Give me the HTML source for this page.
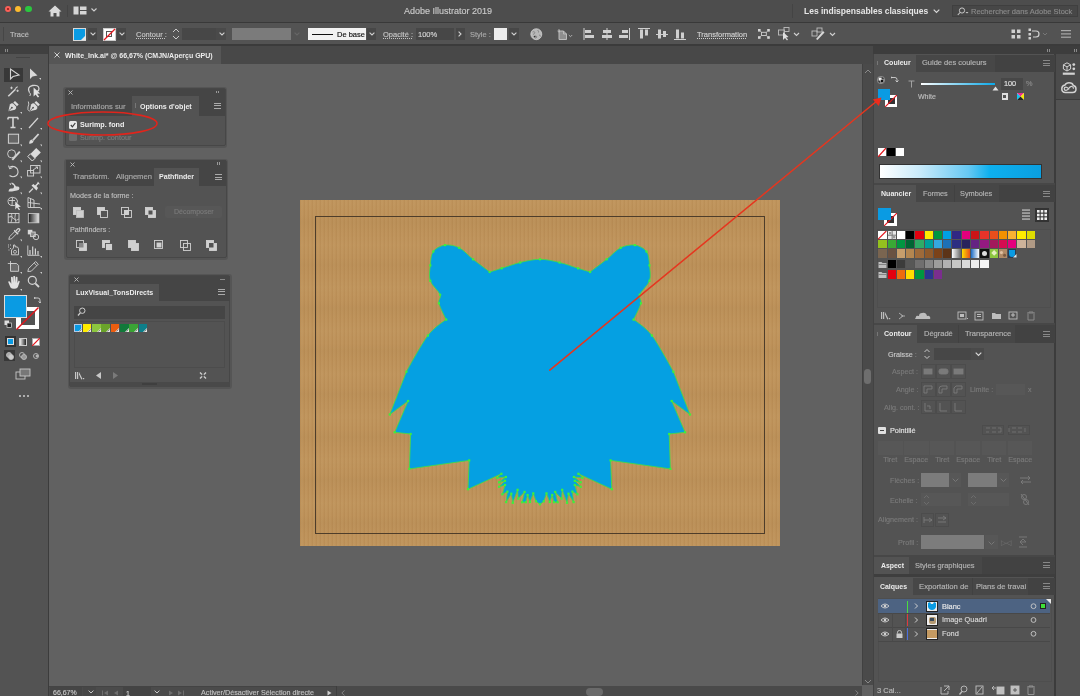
<!DOCTYPE html>
<html><head><meta charset="utf-8">
<style>
*{margin:0;padding:0;box-sizing:border-box}
html,body{width:1080px;height:696px;overflow:hidden;background:#616161;font-family:"Liberation Sans",sans-serif;color:#ddd}
.a{position:absolute}
.t{position:absolute;white-space:nowrap;font-size:7.5px;line-height:10px;-webkit-text-stroke:0.15px currentColor;will-change:transform}
.t[style*="font-weight:700"]{-webkit-text-stroke:0}
</style></head><body>
<!-- ===== TITLE BAR ===== -->
<div class="a" style="left:0;top:0;width:1080px;height:22px;background:#4d4d4d"></div>
<div class="a" style="left:0;top:22px;width:1080px;height:1px;background:#393939"></div>
<div class="a" style="left:4.5px;top:5.7px;width:6.6px;height:6.6px;border-radius:50%;background:#fc5f57"></div>
<div class="a" style="left:6.8px;top:8px;width:2px;height:2px;border-radius:50%;background:#8a1a14"></div>
<div class="a" style="left:14.8px;top:5.7px;width:6.6px;height:6.6px;border-radius:50%;background:#fdbb2e"></div>
<div class="a" style="left:25.4px;top:5.7px;width:6.6px;height:6.6px;border-radius:50%;background:#2ac73f"></div>
<svg class="a" style="left:48px;top:5px" width="14" height="12" viewBox="0 0 14 12"><path d="M7 0.5 L13.5 6.5 L11.5 6.5 L11.5 11.5 L8.5 11.5 L8.5 8 L5.5 8 L5.5 11.5 L2.5 11.5 L2.5 6.5 L0.5 6.5 Z" fill="#d9d9d9"/></svg>
<div class="a" style="left:67px;top:5px;width:1px;height:12px;background:#444"></div>
<svg class="a" style="left:73px;top:6px" width="14" height="9" viewBox="0 0 14 9"><rect x="0.5" y="0.5" width="5" height="8" fill="#d6d6d6"/><rect x="7" y="0.5" width="6.5" height="3.5" fill="#d6d6d6"/><rect x="7" y="5" width="6.5" height="3.5" fill="#d6d6d6"/></svg>
<svg class="a" style="left:91px;top:8px" width="6" height="4" viewBox="0 0 6 4"><path d="M0.5 0.5 L3 3 L5.5 0.5" stroke="#cfcfcf" stroke-width="1.1" fill="none"/></svg>
<div class="t" style="left:404px;top:6px;font-size:9px;line-height:11px;color:#c9c9c9">Adobe Illustrator 2019</div>
<div class="a" style="left:792px;top:4px;width:1px;height:14px;background:#444"></div>
<div class="t" style="left:803.5px;top:6px;font-size:8.5px;line-height:11px;font-weight:700;color:#e6e6e6">Les indispensables classiques</div>
<svg class="a" style="left:933px;top:9px" width="7" height="5" viewBox="0 0 7 5"><path d="M0.7 0.7 L3.5 3.5 L6.3 0.7" stroke="#d8d8d8" stroke-width="1.2" fill="none"/></svg>
<div class="a" style="left:952px;top:5px;width:126px;height:12px;background:#474747;border:1px solid #3f3f3f"></div>
<svg class="a" style="left:957px;top:7px" width="12" height="9" viewBox="0 0 12 9"><circle cx="5" cy="3.5" r="2.6" stroke="#c8c8c8" stroke-width="1" fill="none"/><path d="M3 5.5 L0.8 8" stroke="#c8c8c8" stroke-width="1.1"/><path d="M8.5 5 L10 6.5 L11.5 5 Z" fill="#c8c8c8"/></svg>
<div class="t" style="left:970.5px;top:6px;font-size:7.5px;line-height:11px;color:#8a8a8a">Rechercher dans Adobe Stock</div>

<!-- ===== CONTROL BAR ===== -->
<div class="a" style="left:0;top:23px;width:1080px;height:22px;background:#535353"></div>
<div class="a" style="left:0;top:44px;width:1080px;height:2px;background:#3b3b3b"></div>
<div class="a" style="left:3px;top:27px;width:1px;height:14px;background:#464646"></div>
<div class="t" style="left:10px;top:30px;font-size:7.5px;color:#bdbdbd">Tracé</div>
<!-- fill swatch -->
<div class="a" style="left:73px;top:27.5px;width:13px;height:13px;background:#0a9be3;border:1px solid #d8d8d8"></div>
<svg class="a" style="left:81px;top:35px" width="5" height="5" viewBox="0 0 5 5"><path d="M5 0 L5 5 L0 5 Z" fill="#e8e8e8"/></svg>
<div class="a" style="left:88px;top:28px;width:9px;height:12px;background:#474747"></div>
<svg class="a" style="left:90px;top:32px" width="6" height="4" viewBox="0 0 6 4"><path d="M0.6 0.6 L3 3 L5.4 0.6" stroke="#d0d0d0" stroke-width="1.1" fill="none"/></svg>
<!-- stroke swatch -->
<div class="a" style="left:102.5px;top:27.5px;width:13px;height:13px;background:#fff;border:1px solid #ccc"></div>
<div class="a" style="left:106px;top:31px;width:6px;height:6px;border:1px solid #555"></div>
<svg class="a" style="left:102.5px;top:27.5px" width="13" height="13" viewBox="0 0 13 13"><path d="M12 1 L1 12" stroke="#e8141c" stroke-width="1.3"/></svg>
<div class="a" style="left:117px;top:28px;width:9px;height:12px;background:#474747"></div>
<svg class="a" style="left:119px;top:32px" width="6" height="4" viewBox="0 0 6 4"><path d="M0.6 0.6 L3 3 L5.4 0.6" stroke="#d0d0d0" stroke-width="1.1" fill="none"/></svg>
<div class="t" style="left:136px;top:30px;font-size:7.5px;color:#c4c4c4;text-decoration:underline dotted;text-underline-offset:1px">Contour :</div>
<svg class="a" style="left:172px;top:28px" width="8" height="12" viewBox="0 0 8 12"><path d="M1 4 L4 1 L7 4 M1 8 L4 11 L7 8" stroke="#c9c9c9" stroke-width="1" fill="none"/></svg>
<div class="a" style="left:182px;top:28px;width:34px;height:12px;background:#474747"></div>
<div class="a" style="left:216px;top:28px;width:10px;height:12px;background:#4a4a4a"></div>
<svg class="a" style="left:219px;top:32px" width="6" height="4" viewBox="0 0 6 4"><path d="M0.6 0.6 L3 3 L5.4 0.6" stroke="#d0d0d0" stroke-width="1.1" fill="none"/></svg>
<div class="a" style="left:232px;top:28px;width:59px;height:12px;background:#7b7b7b"></div>
<svg class="a" style="left:294px;top:32px" width="6" height="4" viewBox="0 0 6 4"><path d="M0.6 0.6 L3 3 L5.4 0.6" stroke="#666" stroke-width="1.1" fill="none"/></svg>
<div class="a" style="left:308px;top:28px;width:57.5px;height:12px;background:#f2f2f2"></div>
<div class="a" style="left:312px;top:33.5px;width:21px;height:1.3px;background:#111"></div>
<div class="t" style="left:336.5px;top:30px;font-size:7.5px;color:#111">De base</div>
<div class="a" style="left:367px;top:28px;width:9px;height:12px;background:#474747"></div>
<svg class="a" style="left:369px;top:32px" width="6" height="4" viewBox="0 0 6 4"><path d="M0.6 0.6 L3 3 L5.4 0.6" stroke="#d0d0d0" stroke-width="1.1" fill="none"/></svg>
<div class="t" style="left:382.5px;top:30px;font-size:7.5px;color:#c4c4c4;text-decoration:underline dotted;text-underline-offset:1px">Opacité :</div>
<div class="a" style="left:416px;top:28px;width:38px;height:12px;background:#474747"></div>
<div class="t" style="left:418px;top:30px;font-size:7.5px;color:#d4d4d4">100%</div>
<div class="a" style="left:455.5px;top:28px;width:9.5px;height:12px;background:#474747"></div>
<svg class="a" style="left:458px;top:31px" width="4" height="6" viewBox="0 0 4 6"><path d="M0.6 0.6 L3 3 L0.6 5.4" stroke="#d0d0d0" stroke-width="1.1" fill="none"/></svg>
<div class="t" style="left:470px;top:30px;font-size:7.5px;color:#a8a8a8">Style :</div>
<div class="a" style="left:494px;top:28px;width:13px;height:12px;background:#ececec"></div>
<div class="a" style="left:509px;top:28px;width:10px;height:12px;background:#474747"></div>
<svg class="a" style="left:511px;top:32px" width="6" height="4" viewBox="0 0 6 4"><path d="M0.6 0.6 L3 3 L5.4 0.6" stroke="#d0d0d0" stroke-width="1.1" fill="none"/></svg>
<svg class="a" style="left:530px;top:28px" width="13" height="13" viewBox="0 0 13 13"><circle cx="6.3" cy="6.2" r="5.5" fill="#b8b8b8"/><circle cx="6.3" cy="6.2" r="5.5" fill="none" stroke="#d8d8d8" stroke-width="0.7"/><path d="M2.5 4 Q4 3 5 4.5 Q4.5 6 3 6.5 M7.5 2 Q9 3 8.5 4.5 M5 8 Q6.5 7.5 7 9 Q6 10.5 5 10 M9 7 Q10.5 7 10.5 8.5" stroke="#8a8a8a" stroke-width="1" fill="none"/><circle cx="4.6" cy="8.6" r="0.9" fill="#333"/></svg>
<svg class="a" style="left:557px;top:28px" width="18" height="13" viewBox="0 0 18 13"><path d="M2 3 L6.5 3 L9.5 6 L9.5 11.5 L2 11.5 Z" fill="#8e8e8e" stroke="#c4c4c4" stroke-width="0.9"/><path d="M6.5 3 L6.5 6 L9.5 6" stroke="#c4c4c4" stroke-width="0.8" fill="none"/><path d="M0.5 3 L3 3 M2 1 L2 4.5" stroke="#c4c4c4" stroke-width="0.8"/><path d="M11.8 7 L13.5 8.7 L15.2 7" stroke="#b8b8b8" stroke-width="0.9" fill="none"/></svg>
<!-- align icons -->
<svg class="a" style="left:583px;top:27px" width="104" height="14" viewBox="0 0 104 14" fill="#cfcfcf">
<rect x="0.5" y="1" width="1" height="12"/><rect x="2" y="3" width="6" height="3"/><rect x="2" y="8" width="9" height="3"/>
<rect x="23.5" y="1" width="1" height="12"/><rect x="20" y="3" width="8" height="3"/><rect x="19" y="8" width="10" height="3"/>
<rect x="46" y="1" width="1" height="12"/><rect x="39" y="3" width="6" height="3"/><rect x="36" y="8" width="9" height="3"/>
<rect x="55" y="1" width="12" height="1"/><rect x="57" y="2.5" width="3" height="9"/><rect x="62" y="2.5" width="3" height="6"/>
<rect x="73" y="7" width="12" height="1"/><rect x="75" y="2.5" width="3" height="9"/><rect x="80" y="4" width="3" height="6"/>
<rect x="91" y="12" width="12" height="1"/><rect x="93" y="2.5" width="3" height="9"/><rect x="98" y="5.5" width="3" height="6"/>
</svg>
<div class="t" style="left:697px;top:30px;font-size:7.5px;color:#d0d0d0;text-decoration:underline dotted;text-underline-offset:1px">Transformation</div>
<svg class="a" style="left:758px;top:29px" width="12" height="10" viewBox="0 0 12 10"><g fill="#d4d4d4"><rect x="0" y="0" width="2.6" height="2.6"/><rect x="9.2" y="0" width="2.6" height="2.6"/><rect x="0" y="7.2" width="2.6" height="2.6"/><rect x="9.2" y="7.2" width="2.6" height="2.6"/></g><path d="M2 2 L3.5 3.2 M9.8 2 L8.3 3.2 M2 7.8 L3.5 6.6 M9.8 7.8 L8.3 6.6" stroke="#bbb" stroke-width="0.8"/><rect x="3.5" y="3.3" width="4.8" height="3.2" fill="none" stroke="#cfcfcf" stroke-width="0.9"/></svg>
<svg class="a" style="left:778px;top:27px" width="24" height="14" viewBox="0 0 24 14"><rect x="0.5" y="3" width="6" height="5" stroke="#bdbdbd" stroke-width="0.9" fill="none"/><rect x="6" y="0.5" width="5" height="4" stroke="#bdbdbd" stroke-width="0.9" fill="none"/><path d="M5 5 L5 13 L7 11 L9 13.5 L10 12.5 L8 10.5 L10.5 10 Z" fill="#e0e0e0"/><path d="M16 6 L18.5 8.5 L21 6" stroke="#d0d0d0" stroke-width="1.1" fill="none"/></svg>
<svg class="a" style="left:811px;top:27px" width="26" height="14" viewBox="0 0 26 14"><rect x="1" y="4" width="5" height="5" stroke="#bdbdbd" stroke-width="0.9" fill="none"/><rect x="6" y="1" width="5" height="4" stroke="#bdbdbd" stroke-width="0.9" fill="none"/><path d="M5 12 L12 4 L13.5 5.5 L6.5 13 Z" fill="#d8d8d8"/><path d="M19 6 L21.5 8.5 L24 6" stroke="#d0d0d0" stroke-width="1.1" fill="none"/></svg>
<svg class="a" style="left:1011px;top:29px" width="10" height="10" viewBox="0 0 10 10" fill="#d0d0d0"><rect x="0.5" y="0.5" width="3.5" height="3.5"/><rect x="6" y="0.5" width="3.5" height="3.5"/><rect x="0.5" y="6" width="3.5" height="3.5"/><rect x="6" y="6" width="3.5" height="3.5"/></svg>
<svg class="a" style="left:1028px;top:28px" width="22" height="12" viewBox="0 0 22 12"><rect x="0.5" y="0.5" width="2.5" height="2.5" fill="#d0d0d0"/><rect x="0.5" y="5" width="2.5" height="2.5" fill="#d0d0d0"/><rect x="0.5" y="9" width="2.5" height="2.5" fill="#d0d0d0"/><path d="M4 3 L8 3 Q11 3 11 6 Q11 9 8 9 L5 9" stroke="#d0d0d0" stroke-width="1.2" fill="none"/><path d="M15 5 L17 7 L19 5" stroke="#777" stroke-width="1" fill="none"/></svg>
<svg class="a" style="left:1061px;top:30px" width="10" height="8" viewBox="0 0 10 8" fill="#aaa"><rect x="0" y="0" width="10" height="1.2"/><rect x="0" y="3.3" width="10" height="1.2"/><rect x="0" y="6.6" width="10" height="1.2"/></svg>
<!-- ===== TOOLS PANEL ===== -->
<div class="a" style="left:0;top:46px;width:48px;height:650px;background:#535353"></div>
<div class="a" style="left:0;top:46px;width:48px;height:8px;background:#404040"></div>
<div class="a" style="left:5px;top:48.5px;width:0.8px;height:3px;background:#8a8a8a"></div>
<div class="a" style="left:7px;top:48.5px;width:0.8px;height:3px;background:#8a8a8a"></div>
<div class="a" style="left:16px;top:56.5px;width:14px;height:1.5px;background:#444"></div>
<div class="a" style="left:48px;top:46px;width:1px;height:650px;background:#3c3c3c"></div>
<div class="a" style="left:4px;top:67.5px;width:18.5px;height:14px;background:#383838"></div>
<svg class="a" style="left:0;top:64px" width="48" height="340" viewBox="0 0 48 340" fill="none" stroke="#d4d4d4" stroke-width="1">
<!-- row1 select -->
<path d="M10.5 5 L10.5 15 L13 12.5 L19 11 Z" stroke-width="1.1"/>
<path d="M30 4.5 L30 15 L32.5 12.5 L37.5 11.5 Z" fill="#d8d8d8" stroke="none"/>
<path d="M39 14 L41 14 L41 16 Z" fill="#ccc" stroke="none"/>
<!-- row2 magic wand / lasso -->
<path d="M8.3 32.3 L15.5 25.2" stroke-width="1.6"/><path d="M15.2 24.6 L17.6 22.6" stroke-width="1.2"/>
<path d="M11.5 22.6 L11.5 25.2 M10.2 23.9 L12.8 23.9 M17.6 25.6 L17.6 28 M16.4 26.8 L18.8 26.8" stroke-width="0.9"/>
<path d="M29.5 28.5 Q26.5 23 32.5 21.5 Q38.5 20.5 39 24.5 Q39.2 26.5 37 27.5" stroke-width="1.3"/><path d="M29.5 28.5 Q31.5 30 29.8 32" stroke-width="1"/>
<path d="M33.6 23.5 L33.6 32.5 L35.6 30.4 L37.8 33.6 L39.2 32.8 L37.1 29.7 L40.2 29.5 Z" fill="#e2e2e2" stroke="none"/>
<!-- row3 pen -->
<g transform="translate(13.3 42.3) rotate(45)"><path d="M0 7 L-3.6 1.2 Q-3.8 -1.2 -2 -1.8 L2 -1.8 Q3.8 -1.2 3.6 1.2 Z" fill="#dcdcdc" stroke="none"/><path d="M0 7 L0 2.2" stroke="#535353" stroke-width="0.8"/><circle cx="0" cy="2" r="0.9" fill="#535353" stroke="none"/><rect x="-2.6" y="-5" width="5.2" height="2.4" fill="#dcdcdc" stroke="none"/></g>
<g transform="translate(34.5 42.3) rotate(45)"><path d="M0 7 L-3.6 1.2 Q-3.8 -1.2 -2 -1.8 L2 -1.8 Q3.8 -1.2 3.6 1.2 Z" fill="#dcdcdc" stroke="none"/><path d="M0 7 L0 2.2" stroke="#535353" stroke-width="0.8"/><circle cx="0" cy="2" r="0.9" fill="#535353" stroke="none"/><rect x="-2.6" y="-5" width="5.2" height="2.4" fill="#dcdcdc" stroke="none"/></g>
<path d="M28.3 37.5 Q29.5 40 28 43 Q27 46 29.8 47.5" stroke-width="0.9"/>
<path d="M20 48 L22 48 L22 50 Z" fill="#ccc" stroke="none"/>
<!-- row4 T / line -->
<path d="M8 53.5 L18 53.5 M13 53.5 L13 63.5 M10.5 63.5 L15.5 63.5 M8 53.5 L8 55.5 M18 53.5 L18 55.5" stroke-width="1.6"/>
<path d="M29 64 L38 54" stroke-width="1.2"/>
<path d="M20 64 L22 64 L22 66 Z" fill="#ccc" stroke="none"/><path d="M40 64 L42 64 L42 66 Z" fill="#ccc" stroke="none"/>
<!-- row5 rect / brush -->
<rect x="8.4" y="70.2" width="10.2" height="9" stroke-width="1" fill="#666"/>
<path d="M29 79.6 Q29.3 76.3 31.5 75.6 L33.6 77.6 Q33 80 29 79.6 Z" fill="#dadada" stroke="none"/><path d="M32.8 76.4 L38.6 70" stroke-width="1.8"/>
<path d="M20 80.5 L22 80.5 L22 82.5 Z" fill="#ccc" stroke="none"/><path d="M40 80.5 L42 80.5 L42 82.5 Z" fill="#ccc" stroke="none"/>
<!-- row6 shaper / eraser -->
<circle cx="11.6" cy="89.8" r="4" stroke-width="0.9"/><path d="M12.3 95.8 L19.8 87.6" stroke-width="1.9"/>
<g transform="translate(34.3 90.5) rotate(-45)"><rect x="-6" y="-3.2" width="12" height="6.4" fill="#dcdcdc" stroke="none"/><rect x="-6" y="-3.2" width="3.8" height="6.4" fill="#535353" stroke="#dcdcdc" stroke-width="0.9"/></g>
<path d="M20 96.5 L22 96.5 L22 98.5 Z" fill="#ccc" stroke="none"/><path d="M40 96.5 L42 96.5 L42 98.5 Z" fill="#ccc" stroke="none"/>
<!-- row7 rotate / scale -->
<path d="M9.8 103.2 Q13.5 101 17 104.5 Q19.3 108.5 16.5 111.5 Q13 114 9.5 111.5" stroke-width="1.1"/><path d="M8.6 101.6 L9.6 104.8 L12.6 103.6" stroke-width="1"/>
<rect x="27.6" y="106.5" width="6" height="5.5" stroke-width="0.9"/><rect x="30.6" y="101.5" width="9.4" height="7.5" stroke-width="0.9"/><path d="M33 106 L37.5 103 M35.5 103 L37.5 103 L37.5 105" stroke-width="0.9"/>
<path d="M20 112.5 L22 112.5 L22 114.5 Z" fill="#ccc" stroke="none"/><path d="M40 112.5 L42 112.5 L42 114.5 Z" fill="#ccc" stroke="none"/>
<!-- row8 warp / pin -->
<path d="M8.5 127.5 Q9 124 11.5 124.5 Q13.5 125 14 123 Q14.5 121 12.5 120.5 Q11 120 11.5 118.5 L13 119 Q14 119.5 15 121 Q16 123 17.5 122.5 Q19 122 19.5 124 Q19.5 126 17 126.5 Q14 127 12 127.5 Z" fill="#d8d8d8" stroke="none"/>
<path d="M10 119 L10.5 121" stroke-width="0.9"/>
<path d="M29 128.5 L33 124.5" stroke-width="1.2"/><path d="M31.5 121.5 L36.5 126.5 L38 124 L36.5 122 L38.5 120 L40 120.5 L38 117.5 L37 119.5 L35 121.5 L33.5 120 Z" fill="#dcdcdc" stroke="none"/>
<path d="M20 128.5 L22 128.5 L22 130.5 Z" fill="#ccc" stroke="none"/><path d="M40 128.5 L42 128.5 L42 130.5 Z" fill="#ccc" stroke="none"/>
<!-- row9 shape builder / perspective -->
<path d="M8 137.5 Q8 133.5 12.5 133.3 Q17 133.5 17.5 137 Q17.5 140 14.5 141.5 L11 141.5 Q8 140.5 8 137.5 Z M9 136.5 L15 136.5 M12.5 133.5 L12 141.5" stroke-width="0.9"/>
<path d="M15.3 137.5 L15.3 145.5 L17 143.6 L19 146.3 L20 145.6 L18.3 143 L20.8 142.8 Z" fill="#e0e0e0" stroke="none"/>
<path d="M28 133.5 L28 143.5 L40.5 143.5 M28 133.5 L34 136 L34 143.5 M28 138.5 L40 140 M30.5 134.5 L30.5 143.5" stroke-width="0.9"/>
<path d="M40 144 L42 144 L42 146 Z" fill="#ccc" stroke="none"/>
<!-- row10 mesh / gradient -->
<rect x="8.2" y="149.5" width="10.8" height="9.2" stroke-width="0.9"/><path d="M8.2 153 Q12 151.5 14 155 Q16 157.5 19 155 M11.5 149.5 Q13 153 11 158.7 M15.5 149.5 Q14 153 16 158.7 M10 152 L12 153" stroke-width="0.8"/>
<defs><linearGradient id="tg" x1="0" x2="1"><stop offset="0" stop-color="#1a1a1a"/><stop offset="1" stop-color="#e8e8e8"/></linearGradient></defs>
<rect x="28.3" y="149.6" width="10.6" height="9.2" fill="url(#tg)" stroke="#cfcfcf" stroke-width="0.8"/>
<!-- row11 eyedropper / blend -->
<path d="M8.8 175.4 L9.5 172.8 L15 167.3 L17 169.3 L11.5 174.8 Z" stroke-width="0.9"/>
<path d="M14.2 166.2 L18.2 170.2 M16 166.7 L17.8 164.9 Q18.8 164.2 19.5 165 Q20.2 165.8 19.5 166.6 L17.7 168.4" stroke-width="1.3"/>
<rect x="27.8" y="165.8" width="4.6" height="4.6" fill="#d8d8d8" stroke="none"/><rect x="30.6" y="168" width="4.6" height="4.6" stroke-width="0.9" fill="#888"/><circle cx="36" cy="173" r="2.7" stroke-width="0.9"/>
<path d="M20 175.5 L22 175.5 L22 177.5 Z" fill="#ccc" stroke="none"/>
<!-- row12 symbol sprayer / graph -->
<path d="M11.5 186 L11.5 190.8 L18.5 190.8 L18.5 184.8 Q18.5 182.8 16 182.8 L15 182.8 L15 181 L13.5 181 L13.5 184 L11.5 186 Z" stroke-width="0.9"/><circle cx="15" cy="187.8" r="1.5" stroke-width="0.8"/>
<path d="M8 181 L9 181 M10 181 L11 181 M8 183 L9 183 M10 184.5 L11 184.5 M8.5 186 L9.5 186" stroke-width="0.9"/>
<path d="M27.8 181.5 L27.8 191.3 L39.5 191.3" stroke-width="0.9"/><path d="M30 190.8 L30 186 M32.7 190.8 L32.7 182.5 M35.4 190.8 L35.4 184.5 M38 190.8 L38 187" stroke-width="1.2"/>
<path d="M20 192 L22 192 L22 194 Z" fill="#ccc" stroke="none"/><path d="M40 192 L42 192 L42 194 Z" fill="#ccc" stroke="none"/>
<!-- row13 artboard / slice -->
<path d="M10.5 199.5 L10.5 207.3 L18.6 207.3 L18.6 201.5 L16.6 199.5 Z" stroke-width="0.9" fill="#6a6a6a"/><path d="M7.8 199.5 L12.5 199.5 M10.5 197 L10.5 201.5" stroke-width="0.8"/>
<path d="M27.8 207.5 L28.6 204.5 L35.6 197.5 L38.3 200.2 L31.3 207.2 Z M34.2 199 L36.8 201.6" stroke-width="0.9"/>
<path d="M20 208 L22 208 L22 210 Z" fill="#ccc" stroke="none"/><path d="M40 208 L42 208 L42 210 Z" fill="#ccc" stroke="none"/>
<!-- row14 hand / zoom -->
<path d="M10.5 223.5 L8.2 218 Q8.3 216.8 9.8 217.4 L11.3 219.8 L11 213.3 Q11.8 212.3 12.8 213.2 L13.2 218.8 L13.3 212.3 Q14.2 211.5 15.1 212.3 L15.2 218.8 L15.8 213 Q16.7 212.3 17.5 213.2 L17.5 219.3 L18.5 216.7 Q19.8 216.5 19.7 217.8 L17.8 223.3 Q16.5 224.8 14 224.8 Q11.5 224.8 10.5 223.5 Z" fill="#e2e2e2" stroke="none"/>
<circle cx="32.3" cy="216.3" r="4" stroke-width="1.2"/><path d="M35.3 219.3 L39 223" stroke-width="1.8"/>
<path d="M20 225 L22 225 L22 227 Z" fill="#ccc" stroke="none"/>
</svg>
<!-- fill/stroke big -->
<div class="a" style="left:16px;top:306.5px;width:23px;height:22.5px;background:#fff"></div>
<div class="a" style="left:20.5px;top:311px;width:14px;height:13.5px;background:#535353"></div>
<svg class="a" style="left:16px;top:306.5px" width="23" height="23" viewBox="0 0 23 23"><path d="M22.5 0.5 L0.5 22.5" stroke="#e3141b" stroke-width="1.4"/></svg>
<div class="a" style="left:4px;top:295px;width:23px;height:22.5px;background:#0a9be3;border:1px solid #ddd"></div>
<svg class="a" style="left:33px;top:296px" width="8" height="8" viewBox="0 0 8 8"><path d="M1 2 L5 2 Q7 2 7 4 L7 7 M5.5 5.5 L7 7 L8 5.5" stroke="#cfcfcf" stroke-width="0.9" fill="none"/><path d="M1 1 L1 3 L3 2 Z" fill="#cfcfcf"/></svg>
<svg class="a" style="left:4px;top:320px" width="8" height="8" viewBox="0 0 8 8"><rect x="0.5" y="0.5" width="4.5" height="4.5" fill="#ddd"/><rect x="3" y="3" width="4.5" height="4.5" fill="#222" stroke="#ddd" stroke-width="0.7"/></svg>
<!-- mode buttons -->
<div class="a" style="left:5px;top:336px;width:11px;height:11px;background:#333"></div>
<div class="a" style="left:7px;top:338px;width:7px;height:7px;background:#0a9be3;border:0.6px solid #ddd"></div>
<div class="a" style="left:19px;top:338px;width:8px;height:8px;background:linear-gradient(90deg,#eee,#222);border:0.6px solid #ccc"></div>
<div class="a" style="left:32px;top:338px;width:8px;height:8px;background:#fff;border:0.6px solid #aaa"></div>
<svg class="a" style="left:32px;top:338px" width="8" height="8" viewBox="0 0 8 8"><path d="M8 0 L0 8" stroke="#e3141b" stroke-width="1.2"/></svg>
<div class="a" style="left:4px;top:350px;width:11px;height:11px;background:#383838"></div>
<svg class="a" style="left:5px;top:351px" width="40" height="10" viewBox="0 0 40 10" fill="none" stroke="#bdbdbd" stroke-width="0.9"><circle cx="4" cy="4" r="2.5" fill="#aaa"/><circle cx="6" cy="6" r="2.5" fill="#ccc"/><circle cx="17" cy="4" r="2.5"/><circle cx="19" cy="6" r="2.5" fill="#999"/><circle cx="31" cy="5" r="2.5"/><circle cx="32" cy="5" r="1" fill="#aaa"/></svg>
<svg class="a" style="left:15px;top:368px" width="16" height="12" viewBox="0 0 16 12" fill="none" stroke="#c8c8c8" stroke-width="0.9"><rect x="1" y="4" width="9" height="7"/><rect x="5" y="1" width="10" height="7" fill="#777"/></svg>
<div class="a" style="left:18.5px;top:395px;width:2px;height:2px;border-radius:50%;background:#ccc"></div>
<div class="a" style="left:22.5px;top:395px;width:2px;height:2px;border-radius:50%;background:#ccc"></div>
<div class="a" style="left:26.5px;top:395px;width:2px;height:2px;border-radius:50%;background:#ccc"></div>

<!-- ===== DOC TAB BAR ===== -->
<div class="a" style="left:49px;top:46px;width:824px;height:18px;background:#484848"></div>
<div class="a" style="left:49px;top:46px;width:172px;height:18px;background:#565656"></div>
<svg class="a" style="left:54px;top:52px" width="6" height="6" viewBox="0 0 6 6"><path d="M0.5 0.5 L5.5 5.5 M5.5 0.5 L0.5 5.5" stroke="#cfcfcf" stroke-width="1"/></svg>
<div class="t" style="left:64.5px;top:51px;font-size:7px;line-height:10px;font-weight:700;color:#ececec">White_Ink.ai* @ 66,67% (CMJN/Aperçu GPU)</div>
<!-- ===== CANVAS ===== -->
<div class="a" style="left:49px;top:64px;width:813px;height:622px;background:#616161"></div>
<!-- artboard -->

<div class="a" style="left:300px;top:200px;width:480px;height:346px;background:#bd9159;background-image:repeating-linear-gradient(90deg,rgba(110,70,20,0.05) 0px,rgba(110,70,20,0.05) 1px,rgba(255,235,190,0.035) 1px,rgba(255,235,190,0.035) 3px,rgba(110,70,20,0) 3px,rgba(110,70,20,0) 4px),repeating-linear-gradient(0deg,rgba(255,230,180,0.03) 0px,rgba(0,0,0,0) 11px,rgba(90,60,20,0.03) 23px,rgba(0,0,0,0) 31px,rgba(255,230,180,0.03) 43px)"></div>
<div class="a" style="left:315px;top:215.5px;width:450px;height:318px;border:1px solid #4e3d2a"></div>
<svg class="a" style="left:0;top:0" width="1080" height="696" viewBox="0 0 1080 696">
<path d="M540.0 259.3 C546.6 259.3 553.2 261.0 559.6 262.5 C566.0 264.0 573.0 266.7 578.1 268.3 C583.2 269.9 590.1 272.0 590.1 272.0 C590.1 272.0 601.6 263.3 606.7 259.3 C611.8 255.3 615.9 250.2 620.6 247.8 C625.3 245.4 630.5 244.5 634.8 245.1 C639.1 245.7 644.0 248.1 646.5 251.5 C649.0 254.9 649.0 260.5 649.5 265.4 C650.0 270.3 651.1 275.9 649.5 280.8 C647.9 285.7 641.1 290.9 639.7 294.7 C638.3 298.4 641.9 299.1 640.9 303.3 C639.9 307.5 633.6 319.6 633.6 319.6 C633.6 319.6 645.3 326.8 651.9 335.5 C658.5 344.2 673.4 371.7 673.4 371.7 L690.0 414.5 L671.7 401.0 L685.1 432.3 L669.2 434.0 L670.4 468.9 L610.6 460.4 L611.8 489.2 L578.4 473.8 L582.5 477.8 L573.9 477.0 L580.7 482.3 L574.8 480.8 L580.7 486.8 L574.8 485.0 L577.4 494.3 L572.4 491.6 L573.6 502.1 L568.5 493.7 L567.0 502.8 L562.2 489.8 L561.6 498.6 L555.2 491.9 L557.6 502.2 L554.0 502.2 L552.2 495.0 L549.8 502.0 L546.5 493.4 L543.8 501.3 L540.0 504.3 L536.0 501.3 L533.3 493.4 L530.0 502.0 L527.6 495.0 L525.8 502.2 L522.2 502.2 L524.6 491.9 L518.2 498.6 L517.6 489.8 L512.8 502.8 L511.3 493.7 L506.2 502.1 L507.4 491.6 L502.4 494.3 L505.0 485.0 L499.1 486.8 L505.0 480.8 L499.1 482.3 L505.9 477.0 L497.3 477.8 L501.4 473.8 L468.0 489.2 L469.2 460.4 L409.4 468.9 L410.6 434.0 L394.7 432.3 L408.1 401.0 L389.8 414.5 L406.4 371.7 C406.4 371.7 421.3 344.2 427.9 335.5 C434.5 326.8 446.2 319.6 446.2 319.6 C446.2 319.6 439.9 307.5 438.9 303.3 C437.9 299.1 441.5 298.4 440.1 294.7 C438.7 290.9 431.9 285.7 430.3 280.8 C428.7 275.9 429.8 270.3 430.3 265.4 C430.8 260.5 430.8 254.9 433.3 251.5 C435.7 248.1 440.7 245.7 445.0 245.1 C449.3 244.5 454.5 245.4 459.2 247.8 C463.9 250.2 468.0 255.3 473.1 259.3 C478.2 263.3 489.7 272.0 489.7 272.0 C489.7 272.0 496.6 269.9 501.7 268.3 C506.8 266.7 513.8 264.0 520.2 262.5 C526.6 261.0 533.4 259.3 540.0 259.3 Z" fill="#05a0e2" stroke="#45e03c" stroke-width="0.8" stroke-linejoin="miter"/>
<g fill="#3ef03a"><rect x="538.9" y="258.2" width="2.2" height="2.2"/><rect x="558.5" y="261.4" width="2.2" height="2.2"/><rect x="577.0" y="267.2" width="2.2" height="2.2"/><rect x="589.0" y="270.9" width="2.2" height="2.2"/><rect x="605.6" y="258.2" width="2.2" height="2.2"/><rect x="619.5" y="246.7" width="2.2" height="2.2"/><rect x="633.7" y="244.0" width="2.2" height="2.2"/><rect x="645.4" y="250.4" width="2.2" height="2.2"/><rect x="648.4" y="264.3" width="2.2" height="2.2"/><rect x="648.4" y="279.7" width="2.2" height="2.2"/><rect x="638.6" y="293.6" width="2.2" height="2.2"/><rect x="639.8" y="302.2" width="2.2" height="2.2"/><rect x="632.5" y="318.5" width="2.2" height="2.2"/><rect x="650.8" y="334.4" width="2.2" height="2.2"/><rect x="672.3" y="370.6" width="2.2" height="2.2"/><rect x="688.9" y="413.4" width="2.2" height="2.2"/><rect x="670.6" y="399.9" width="2.2" height="2.2"/><rect x="684.0" y="431.2" width="2.2" height="2.2"/><rect x="668.1" y="432.9" width="2.2" height="2.2"/><rect x="669.3" y="467.8" width="2.2" height="2.2"/><rect x="609.5" y="459.3" width="2.2" height="2.2"/><rect x="610.7" y="488.1" width="2.2" height="2.2"/><rect x="577.3" y="472.7" width="2.2" height="2.2"/><rect x="581.4" y="476.7" width="2.2" height="2.2"/><rect x="572.8" y="475.9" width="2.2" height="2.2"/><rect x="579.6" y="481.2" width="2.2" height="2.2"/><rect x="573.7" y="479.7" width="2.2" height="2.2"/><rect x="579.6" y="485.7" width="2.2" height="2.2"/><rect x="573.7" y="483.9" width="2.2" height="2.2"/><rect x="576.3" y="493.2" width="2.2" height="2.2"/><rect x="571.3" y="490.5" width="2.2" height="2.2"/><rect x="572.5" y="501.0" width="2.2" height="2.2"/><rect x="567.4" y="492.6" width="2.2" height="2.2"/><rect x="565.9" y="501.7" width="2.2" height="2.2"/><rect x="561.1" y="488.7" width="2.2" height="2.2"/><rect x="560.5" y="497.5" width="2.2" height="2.2"/><rect x="554.1" y="490.8" width="2.2" height="2.2"/><rect x="556.5" y="501.1" width="2.2" height="2.2"/><rect x="552.9" y="501.1" width="2.2" height="2.2"/><rect x="551.1" y="493.9" width="2.2" height="2.2"/><rect x="548.7" y="500.9" width="2.2" height="2.2"/><rect x="545.4" y="492.3" width="2.2" height="2.2"/><rect x="542.7" y="500.2" width="2.2" height="2.2"/><rect x="538.9" y="503.2" width="2.2" height="2.2"/><rect x="534.9" y="500.2" width="2.2" height="2.2"/><rect x="532.2" y="492.3" width="2.2" height="2.2"/><rect x="528.9" y="500.9" width="2.2" height="2.2"/><rect x="526.5" y="493.9" width="2.2" height="2.2"/><rect x="524.7" y="501.1" width="2.2" height="2.2"/><rect x="521.1" y="501.1" width="2.2" height="2.2"/><rect x="523.5" y="490.8" width="2.2" height="2.2"/><rect x="517.1" y="497.5" width="2.2" height="2.2"/><rect x="516.5" y="488.7" width="2.2" height="2.2"/><rect x="511.7" y="501.7" width="2.2" height="2.2"/><rect x="510.2" y="492.6" width="2.2" height="2.2"/><rect x="505.1" y="501.0" width="2.2" height="2.2"/><rect x="506.3" y="490.5" width="2.2" height="2.2"/><rect x="501.3" y="493.2" width="2.2" height="2.2"/><rect x="503.9" y="483.9" width="2.2" height="2.2"/><rect x="498.0" y="485.7" width="2.2" height="2.2"/><rect x="503.9" y="479.7" width="2.2" height="2.2"/><rect x="498.0" y="481.2" width="2.2" height="2.2"/><rect x="504.8" y="475.9" width="2.2" height="2.2"/><rect x="496.2" y="476.7" width="2.2" height="2.2"/><rect x="500.3" y="472.7" width="2.2" height="2.2"/><rect x="466.9" y="488.1" width="2.2" height="2.2"/><rect x="468.1" y="459.3" width="2.2" height="2.2"/><rect x="408.3" y="467.8" width="2.2" height="2.2"/><rect x="409.5" y="432.9" width="2.2" height="2.2"/><rect x="393.6" y="431.2" width="2.2" height="2.2"/><rect x="407.0" y="399.9" width="2.2" height="2.2"/><rect x="388.7" y="413.4" width="2.2" height="2.2"/><rect x="405.3" y="370.6" width="2.2" height="2.2"/><rect x="426.8" y="334.4" width="2.2" height="2.2"/><rect x="445.1" y="318.5" width="2.2" height="2.2"/><rect x="437.8" y="302.2" width="2.2" height="2.2"/><rect x="439.0" y="293.6" width="2.2" height="2.2"/><rect x="429.2" y="279.7" width="2.2" height="2.2"/><rect x="429.2" y="264.3" width="2.2" height="2.2"/><rect x="432.2" y="250.4" width="2.2" height="2.2"/><rect x="443.9" y="244.0" width="2.2" height="2.2"/><rect x="458.1" y="246.7" width="2.2" height="2.2"/><rect x="472.0" y="258.2" width="2.2" height="2.2"/><rect x="488.6" y="270.9" width="2.2" height="2.2"/><rect x="500.6" y="267.2" width="2.2" height="2.2"/><rect x="519.1" y="261.4" width="2.2" height="2.2"/></g>
</svg>
<!-- ===== FLOATING PANEL 1: Options d'objet ===== -->
<div class="a" style="left:63px;top:87px;width:164px;height:61px;background:rgba(0,0,0,0.12);border-radius:3px"></div>
<div class="a" style="left:64.5px;top:88px;width:161px;height:58px;background:#535353;border:1px solid #474747;border-radius:2px"></div>
<div class="a" style="left:65px;top:88.5px;width:160px;height:7.5px;background:#454545"></div>
<svg class="a" style="left:68px;top:90px" width="5" height="5" viewBox="0 0 5 5"><path d="M0.5 0.5 L4.5 4.5 M4.5 0.5 L0.5 4.5" stroke="#bbb" stroke-width="0.9"/></svg>
<div class="a" style="left:216px;top:90.5px;width:0.8px;height:2.5px;background:#999"></div><div class="a" style="left:218px;top:90.5px;width:0.8px;height:2.5px;background:#999"></div>
<div class="a" style="left:65px;top:96px;width:160px;height:19.5px;background:#454545"></div>
<div class="a" style="left:131.5px;top:96px;width:67px;height:19.5px;background:#535353"></div>
<div class="t" style="left:71px;top:102px;font-size:7.6px;color:#a8a8a8">Informations sur</div>
<div class="a" style="left:134.5px;top:103px;width:0.8px;height:5px;background:#777"></div>
<div class="t" style="left:140px;top:102px;font-size:7.1px;font-weight:700;color:#ececec">Options d'objet</div>
<div class="a" style="left:214px;top:102.5px;width:7px;height:1px;background:#aaa"></div><div class="a" style="left:214px;top:105px;width:7px;height:1px;background:#aaa"></div><div class="a" style="left:214px;top:107.5px;width:7px;height:1px;background:#aaa"></div>
<div class="a" style="left:69px;top:120.5px;width:8px;height:8px;background:#e6e6e6;border-radius:1.5px"></div>
<svg class="a" style="left:69px;top:120.5px" width="8" height="8" viewBox="0 0 8 8"><path d="M1.8 4 L3.4 5.8 L6.3 2" stroke="#3a3a3a" stroke-width="1.2" fill="none"/></svg>
<div class="t" style="left:80px;top:120px;font-size:7.2px;font-weight:700;color:#f0f0f0">Surimp. fond</div>
<div class="a" style="left:69px;top:133px;width:8px;height:8px;background:#6b6b6b;border-radius:1.5px"></div>
<div class="t" style="left:80px;top:133px;font-size:7.3px;color:#7a7a7a">Surimp. contour</div>
<svg class="a" style="left:40px;top:105px" width="125" height="40" viewBox="0 0 125 40"><ellipse cx="62.5" cy="18.5" rx="54.5" ry="11.5" stroke="#e0251c" stroke-width="1.6" fill="none"/></svg>

<!-- ===== FLOATING PANEL 2: Pathfinder ===== -->
<div class="a" style="left:64px;top:158.5px;width:164px;height:101px;background:rgba(0,0,0,0.12);border-radius:3px"></div>
<div class="a" style="left:65.5px;top:159.5px;width:161px;height:98px;background:#535353;border:1px solid #474747;border-radius:2px"></div>
<div class="a" style="left:66px;top:160px;width:160px;height:7.5px;background:#454545"></div>
<svg class="a" style="left:70px;top:161.5px" width="5" height="5" viewBox="0 0 5 5"><path d="M0.5 0.5 L4.5 4.5 M4.5 0.5 L0.5 4.5" stroke="#bbb" stroke-width="0.9"/></svg>
<div class="a" style="left:217px;top:162px;width:0.8px;height:2.5px;background:#999"></div><div class="a" style="left:219px;top:162px;width:0.8px;height:2.5px;background:#999"></div>
<div class="a" style="left:66px;top:167.5px;width:160px;height:18.5px;background:#454545"></div>
<div class="a" style="left:153.5px;top:167.5px;width:45px;height:18.5px;background:#535353"></div>
<div class="t" style="left:72.5px;top:172px;font-size:7.6px;color:#ababab">Transform.</div>
<div class="t" style="left:115.5px;top:172px;font-size:7.6px;color:#ababab">Alignemen</div>
<div class="t" style="left:158.5px;top:172px;font-size:7.1px;font-weight:700;color:#ececec">Pathfinder</div>
<div class="a" style="left:215px;top:174px;width:7px;height:1px;background:#aaa"></div><div class="a" style="left:215px;top:176.5px;width:7px;height:1px;background:#aaa"></div><div class="a" style="left:215px;top:179px;width:7px;height:1px;background:#aaa"></div>
<div class="t" style="left:69.5px;top:190.5px;font-size:7.2px;color:#bdbdbd">Modes de la forme :</div>
<svg class="a" style="left:66px;top:200px" width="160" height="55" viewBox="0 0 160 55" fill="none" stroke="#d0d0d0" stroke-width="0.9">
<!-- shape modes -->
<rect x="7.5" y="7.5" width="7" height="7" fill="#d0d0d0"/><rect x="10.5" y="10.5" width="7" height="7" fill="#d0d0d0" stroke="#bdbdbd"/>
<rect x="31.5" y="7.5" width="7" height="7" fill="#d0d0d0"/><rect x="34.5" y="10.5" width="7" height="7" fill="#535353"/>
<rect x="55.5" y="7.5" width="7" height="7"/><rect x="58.5" y="10.5" width="7" height="7"/><rect x="58.5" y="10.5" width="4" height="4" fill="#d0d0d0"/>
<rect x="79.5" y="7.5" width="7" height="7" fill="#d0d0d0"/><rect x="82.5" y="10.5" width="7" height="7" fill="#d0d0d0"/><rect x="82.5" y="10.5" width="4" height="4" fill="#535353" stroke="none"/>
<!-- pathfinders -->
<rect x="10.5" y="40.5" width="7" height="7"/><rect x="13.5" y="43.5" width="7" height="7" fill="#d0d0d0"/><rect x="13" y="43" width="4.5" height="4.5" fill="#888" stroke="none"/>
<rect x="36.5" y="40.5" width="7" height="7" fill="#d0d0d0"/><rect x="39.5" y="43.5" width="7" height="7" fill="#d0d0d0" stroke="#535353"/>
<rect x="62.5" y="40.5" width="7" height="7" fill="#d0d0d0"/><rect x="65.5" y="43.5" width="7" height="7" fill="#d0d0d0"/>
<rect x="88.5" y="40.5" width="8" height="8"/><rect x="91" y="43" width="4" height="4" fill="#d0d0d0"/>
<rect x="114.5" y="40.5" width="7" height="7"/><rect x="117.5" y="43.5" width="7" height="7"/>
<rect x="140.5" y="40.5" width="7" height="7" fill="#d0d0d0"/><rect x="143.5" y="43.5" width="7" height="7" fill="#d0d0d0"/><rect x="143" y="43" width="4.5" height="4.5" fill="#535353" stroke="none"/>
</svg>
<div class="a" style="left:165px;top:205.5px;width:56.5px;height:12px;background:#575757;border-radius:2px"></div>
<div class="t" style="left:173.5px;top:207px;font-size:7px;color:#7a7a7a">Décomposer</div>
<div class="t" style="left:69.5px;top:224.5px;font-size:7.2px;color:#bdbdbd">Pathfinders :</div>

<!-- ===== FLOATING PANEL 3: LuxVisual ===== -->
<div class="a" style="left:68px;top:274px;width:164px;height:115px;background:rgba(0,0,0,0.12);border-radius:3px"></div>
<div class="a" style="left:69px;top:275px;width:161px;height:112px;background:#535353;border:1px solid #474747;border-radius:2px"></div>
<div class="a" style="left:69.5px;top:275.5px;width:160px;height:8px;background:#454545"></div>
<svg class="a" style="left:73.5px;top:277px" width="5" height="5" viewBox="0 0 5 5"><path d="M0.5 0.5 L4.5 4.5 M4.5 0.5 L0.5 4.5" stroke="#bbb" stroke-width="0.9"/></svg>
<div class="a" style="left:220px;top:279px;width:5px;height:1px;background:#888"></div>
<div class="a" style="left:69.5px;top:283.5px;width:160px;height:17.5px;background:#454545"></div>
<div class="a" style="left:69.5px;top:283.5px;width:89.5px;height:17.5px;background:#535353"></div>
<div class="t" style="left:76px;top:287.5px;font-size:7.05px;font-weight:700;color:#ececec">LuxVisual_TonsDirects</div>
<div class="a" style="left:218px;top:288.5px;width:7px;height:1px;background:#aaa"></div><div class="a" style="left:218px;top:291px;width:7px;height:1px;background:#aaa"></div><div class="a" style="left:218px;top:293.5px;width:7px;height:1px;background:#aaa"></div>
<div class="a" style="left:74px;top:305.5px;width:151px;height:13px;background:#454545"></div>
<svg class="a" style="left:77px;top:307px" width="9" height="10" viewBox="0 0 9 10"><circle cx="5.3" cy="3.7" r="2.7" stroke="#cfcfcf" stroke-width="1" fill="none"/><path d="M3.3 5.8 L1 8.5" stroke="#cfcfcf" stroke-width="1.3"/></svg>
<div class="a" style="left:73.5px;top:321px;width:151px;height:47px;border:1px solid #4c4c4c"></div>
<div id="luxsw" class="a" style="left:73.5px;top:323.5px;width:80px;height:9px"></div>
<svg class="a" style="left:73px;top:370px" width="155" height="12" viewBox="0 0 155 12" fill="#c8c8c8">
<rect x="2" y="2" width="1.2" height="7"/><rect x="4" y="2" width="1.2" height="7"/><path d="M6 2 L9.5 9 L8.3 9.5 L6 4.5 Z"/><rect x="10" y="8" width="1.2" height="1.2"/>
<path d="M28 2 L23 5.5 L28 9 Z"/><path d="M40 2 L45 5.5 L40 9 Z" fill="#7a7a7a"/>
<path d="M127 2.5 L133 8.5 M133 2.5 L127 8.5" stroke="#cfcfcf" stroke-width="1.4"/><rect x="128.8" y="4.3" width="2.4" height="2.4" fill="#535353"/>
</svg>
<div class="a" style="left:69.5px;top:381.5px;width:160px;height:5px;background:#494949"></div>
<div class="a" style="left:142px;top:382.5px;width:15px;height:2px;background:#3f3f3f"></div>
<div class="a" style="left:73.5px;top:323.5px;width:8.6px;height:8.5px;background:#0a9be3;border:1px solid #b0c8e8;"></div><svg class="a" style="left:78.1px;top:328px" width="4" height="4" viewBox="0 0 4 4"><path d="M4 0 L4 4 L0 4 Z" fill="#e8e8e8"/><path d="M1.5 3.5 L3.5 1.5" stroke="#444" stroke-width="0.6"/></svg><div class="a" style="left:82.8px;top:323.5px;width:8.6px;height:8.5px;background:#ffec00;"></div><svg class="a" style="left:87.4px;top:328px" width="4" height="4" viewBox="0 0 4 4"><path d="M4 0 L4 4 L0 4 Z" fill="#e8e8e8"/><path d="M1.5 3.5 L3.5 1.5" stroke="#444" stroke-width="0.6"/></svg><div class="a" style="left:92.1px;top:323.5px;width:8.6px;height:8.5px;background:#8cc63f;"></div><svg class="a" style="left:96.7px;top:328px" width="4" height="4" viewBox="0 0 4 4"><path d="M4 0 L4 4 L0 4 Z" fill="#e8e8e8"/><path d="M1.5 3.5 L3.5 1.5" stroke="#444" stroke-width="0.6"/></svg><div class="a" style="left:101.4px;top:323.5px;width:8.6px;height:8.5px;background:#6aa32a;"></div><svg class="a" style="left:106.0px;top:328px" width="4" height="4" viewBox="0 0 4 4"><path d="M4 0 L4 4 L0 4 Z" fill="#e8e8e8"/><path d="M1.5 3.5 L3.5 1.5" stroke="#444" stroke-width="0.6"/></svg><div class="a" style="left:110.7px;top:323.5px;width:8.6px;height:8.5px;background:#ed5d10;"></div><svg class="a" style="left:115.3px;top:328px" width="4" height="4" viewBox="0 0 4 4"><path d="M4 0 L4 4 L0 4 Z" fill="#e8e8e8"/><path d="M1.5 3.5 L3.5 1.5" stroke="#444" stroke-width="0.6"/></svg><div class="a" style="left:120.0px;top:323.5px;width:8.6px;height:8.5px;background:#12793a;"></div><svg class="a" style="left:124.6px;top:328px" width="4" height="4" viewBox="0 0 4 4"><path d="M4 0 L4 4 L0 4 Z" fill="#e8e8e8"/><path d="M1.5 3.5 L3.5 1.5" stroke="#444" stroke-width="0.6"/></svg><div class="a" style="left:129.3px;top:323.5px;width:8.6px;height:8.5px;background:#3aa335;"></div><svg class="a" style="left:133.9px;top:328px" width="4" height="4" viewBox="0 0 4 4"><path d="M4 0 L4 4 L0 4 Z" fill="#e8e8e8"/><path d="M1.5 3.5 L3.5 1.5" stroke="#444" stroke-width="0.6"/></svg><div class="a" style="left:138.6px;top:323.5px;width:8.6px;height:8.5px;background:#0e7f8a;"></div><svg class="a" style="left:143.2px;top:328px" width="4" height="4" viewBox="0 0 4 4"><path d="M4 0 L4 4 L0 4 Z" fill="#e8e8e8"/><path d="M1.5 3.5 L3.5 1.5" stroke="#444" stroke-width="0.6"/></svg>
<!-- ===== RIGHT DOCK ===== -->
<div class="a" style="left:873px;top:46px;width:207px;height:650px;background:#434343"></div>
<div class="a" style="left:873px;top:46px;width:207px;height:8px;background:#3d3d3d"></div>
<div class="a" style="left:1046.5px;top:48.5px;width:0.8px;height:3px;background:#8a8a8a"></div><div class="a" style="left:1048.5px;top:48.5px;width:0.8px;height:3px;background:#8a8a8a"></div>
<div class="a" style="left:1073.5px;top:48.5px;width:0.8px;height:3px;background:#8a8a8a"></div><div class="a" style="left:1075.5px;top:48.5px;width:0.8px;height:3px;background:#8a8a8a"></div>
<!-- canvas v-scrollbar -->
<div class="a" style="left:862px;top:64px;width:11px;height:621px;background:#4a4a4a;border-left:1px solid #414141"></div>
<svg class="a" style="left:864px;top:69px" width="8" height="5" viewBox="0 0 8 5"><path d="M1 4 L4 1 L7 4" stroke="#8a8a8a" stroke-width="1" fill="none"/></svg>
<div class="a" style="left:864px;top:368.5px;width:7px;height:15.5px;background:#6e6e6e;border-radius:3.5px"></div>
<svg class="a" style="left:864px;top:679px" width="8" height="5" viewBox="0 0 8 5"><path d="M1 1 L4 4 L7 1" stroke="#8a8a8a" stroke-width="1" fill="none"/></svg>
<!-- main column -->
<div class="a" style="left:873.5px;top:54px;width:181px;height:642px;background:#535353"></div>
<div class="a" style="left:1054px;top:54px;width:2px;height:642px;background:#3c3c3c"></div>
<div class="a" style="left:1056px;top:54px;width:24px;height:642px;background:#535353"></div>
<div class="a" style="left:1056px;top:54px;width:24px;height:45px;background:#4b4b4b"></div>
<div class="a" style="left:1056px;top:98.5px;width:24px;height:1.5px;background:#3c3c3c"></div>
<svg class="a" style="left:1061px;top:61px" width="16" height="34" viewBox="0 0 16 34" fill="none" stroke="#d2d2d2">
<path d="M6 1.8 L9.6 3.8 L9.6 8 L6 10 L2.4 8 L2.4 3.8 Z M2.4 3.8 L6 5.9 L9.6 3.8 M6 5.9 L6 10" stroke-width="1"/>
<circle cx="12.8" cy="3.6" r="1.4" fill="#d2d2d2" stroke="none"/><circle cx="12.8" cy="7.8" r="1.4" fill="#d2d2d2" stroke="none"/>
<rect x="1.8" y="11.6" width="12" height="2.2" fill="#d2d2d2" stroke="none"/>
<path d="M4.5 31.5 Q0.8 31.5 0.8 27.8 Q0.8 24.5 4 24 Q5 21.8 8 21.8 Q11.5 21.8 12.3 24.5 Q15 25 15 28 Q15 31.5 11.5 31.5 Z" stroke-width="1.5"/>
<path d="M8 28.5 Q6.5 26.2 5 26.2 Q3.2 26.2 3.2 27.8 Q3.2 29.4 5 29.4 Q6.5 29.4 8 27.2 Q9.5 25 11 25.5 Q12.5 26 12.5 27.8" stroke-width="1.2"/>
</svg>

<!-- Couleur panel -->
<div class="a" style="left:873.5px;top:54.5px;width:181px;height:17px;background:#424242"></div>
<div class="a" style="left:873.5px;top:54.5px;width:42.5px;height:17px;background:#535353"></div>
<div class="a" style="left:916px;top:54.5px;width:79px;height:17px;background:#474747"></div>
<div class="a" style="left:877px;top:61px;width:0.8px;height:4px;background:#777"></div>
<div class="t" style="left:884px;top:58px;font-size:7.05px;font-weight:700;color:#ececec">Couleur</div>
<div class="t" style="left:922px;top:58px;font-size:7.5px;color:#b4b4b4">Guide des couleurs</div>
<div class="a" style="left:1043px;top:60px;width:7px;height:1px;background:#888"></div><div class="a" style="left:1043px;top:62.5px;width:7px;height:1px;background:#888"></div><div class="a" style="left:1043px;top:65px;width:7px;height:1px;background:#888"></div>
<svg class="a" style="left:877px;top:76px" width="22" height="8" viewBox="0 0 22 8"><circle cx="4" cy="4" r="3.7" fill="#3a3a3a" stroke="#bdbdbd" stroke-width="0.6"/><rect x="1.6" y="1.6" width="3" height="3" fill="#f4f4f4"/><rect x="3.6" y="3.6" width="3" height="3" fill="#111" stroke="#ddd" stroke-width="0.5"/><path d="M15 1.5 L18 1.5 Q20 1.5 20 3.5 L20 6 M18.5 4.5 L20 6 L21.5 4.5" stroke="#cfcfcf" stroke-width="0.9" fill="none"/><path d="M14 0.5 L14 2.5 L16 1.5 Z" fill="#cfcfcf"/></svg>
<div class="a" style="left:885px;top:95px;width:12px;height:11.5px;background:#fff"></div>
<div class="a" style="left:887.5px;top:97.5px;width:7px;height:6.5px;background:#333"></div>
<svg class="a" style="left:885px;top:95px" width="12" height="12" viewBox="0 0 12 12"><path d="M12 0 L0 12" stroke="#e3141b" stroke-width="1.2"/></svg>
<div class="a" style="left:878.3px;top:88.5px;width:12px;height:11.5px;background:#0a9be3"></div>
<svg class="a" style="left:908px;top:80px" width="7" height="8" viewBox="0 0 7 8"><path d="M0.5 1 L6.5 1 M3.5 1 L3.5 7.5" stroke="#aaa" stroke-width="0.9"/></svg>
<div class="a" style="left:921px;top:82.6px;width:74px;height:2.8px;background:linear-gradient(90deg,#fff,#0aa8e8)"></div>
<svg class="a" style="left:991.5px;top:85.5px" width="7" height="5" viewBox="0 0 7 5"><path d="M3.5 0.5 L6.5 4.5 L0.5 4.5 Z" fill="#e0e0e0"/></svg>
<div class="a" style="left:1001px;top:78.3px;width:22px;height:11.7px;background:#474747"></div>
<div class="t" style="left:1003.5px;top:79px;font-size:7.3px;color:#e0e0e0">100</div>
<div class="t" style="left:1025.5px;top:79px;font-size:7.3px;color:#8a8a8a">%</div>
<div class="t" style="left:917.7px;top:91.5px;font-size:7px;color:#bdbdbd">White</div>
<div class="a" style="left:1001.5px;top:93.2px;width:6.5px;height:6.5px;background:#e0e0e0"></div>
<div class="a" style="left:1003.3px;top:95px;width:3px;height:3px;background:#555"></div>
<svg class="a" style="left:1017px;top:93px" width="7" height="7" viewBox="0 0 7 7"><rect width="7" height="7" fill="#eee"/><path d="M0 0 L3.5 3.5 L0 7 Z" fill="#12c4ee"/><path d="M0 0 L7 0 L3.5 3.5 Z" fill="#ea2f8f"/><path d="M7 0 L7 7 L3.5 3.5 Z" fill="#f6e60b"/><path d="M0 7 L7 7 L3.5 3.5 Z" fill="#222"/></svg>
<div class="a" style="left:878px;top:148px;width:8px;height:8.3px;background:#fff"></div>
<svg class="a" style="left:878px;top:148px" width="8" height="9" viewBox="0 0 8 9"><path d="M8 0 L0 9" stroke="#e3141b" stroke-width="1.2"/></svg>
<div class="a" style="left:886.5px;top:148px;width:8.5px;height:8.3px;background:#000"></div>
<div class="a" style="left:895.5px;top:148px;width:8px;height:8.3px;background:#fff"></div>
<div class="a" style="left:878.5px;top:164px;width:163.5px;height:14.5px;background:#333"></div>
<div class="a" style="left:879.5px;top:165px;width:161.5px;height:12.5px;background:linear-gradient(90deg,#fff 0%,#c8eafa 25%,#66c8f2 55%,#0eb0ee 68%,#0a9fe0 100%)"></div>
<div class="a" style="left:873.5px;top:183px;width:181px;height:1.5px;background:#474747"></div>

<!-- Nuancier panel -->
<div class="a" style="left:873.5px;top:184.5px;width:181px;height:17.5px;background:#424242"></div>
<div class="a" style="left:873.5px;top:184.5px;width:42.5px;height:17.5px;background:#535353"></div>
<div class="a" style="left:916px;top:184.5px;width:82.5px;height:17.5px;background:#474747"></div>
<div class="a" style="left:953.5px;top:184.5px;width:0.8px;height:17.5px;background:#414141"></div>
<div class="t" style="left:880.5px;top:189px;font-size:7.05px;font-weight:700;color:#ececec">Nuancier</div>
<div class="t" style="left:922.5px;top:189px;font-size:7.3px;color:#b4b4b4">Formes</div>
<div class="t" style="left:959.5px;top:189px;font-size:7.35px;color:#b4b4b4">Symboles</div>
<div class="a" style="left:1043px;top:190.5px;width:7px;height:1px;background:#888"></div><div class="a" style="left:1043px;top:193px;width:7px;height:1px;background:#888"></div><div class="a" style="left:1043px;top:195.5px;width:7px;height:1px;background:#888"></div>
<div class="a" style="left:884px;top:213px;width:13px;height:13px;background:#fff"></div>
<div class="a" style="left:887px;top:216px;width:7px;height:7px;background:#333"></div>
<svg class="a" style="left:884px;top:213px" width="13" height="13" viewBox="0 0 13 13"><path d="M13 0 L0 13" stroke="#e3141b" stroke-width="1.2"/></svg>
<div class="a" style="left:878.3px;top:207.6px;width:12.3px;height:12px;background:#0a9be3"></div>
<svg class="a" style="left:1021.5px;top:209px" width="8" height="11" viewBox="0 0 8 11" fill="#d0d0d0"><rect y="0.5" width="8" height="1.1"/><rect y="3.5" width="8" height="1.1"/><rect y="6.5" width="8" height="1.1"/><rect y="9.5" width="8" height="1.1"/></svg>
<div class="a" style="left:1034.8px;top:207.6px;width:14.2px;height:14px;background:#333"></div>
<svg class="a" style="left:1037px;top:210px" width="10" height="10" viewBox="0 0 10 10" fill="#eee"><rect x="0" y="0" width="2.6" height="2.6"/><rect x="3.7" y="0" width="2.6" height="2.6"/><rect x="7.4" y="0" width="2.6" height="2.6"/><rect x="0" y="3.7" width="2.6" height="2.6"/><rect x="3.7" y="3.7" width="2.6" height="2.6"/><rect x="7.4" y="3.7" width="2.6" height="2.6"/><rect x="0" y="7.4" width="2.6" height="2.6"/><rect x="3.7" y="7.4" width="2.6" height="2.6"/><rect x="7.4" y="7.4" width="2.6" height="2.6"/></svg>
<div class="a" style="left:877px;top:229px;width:174px;height:79px;border:1px solid #4e4e4e"></div>
<div id="swgrid"></div>
<svg class="a" style="left:878px;top:310px" width="165" height="12" viewBox="0 0 165 12" fill="#bdbdbd">
<rect x="3" y="2" width="1.2" height="7"/><rect x="5" y="2" width="1.2" height="7"/><path d="M7 2 L10.5 9 L9.3 9.5 L7 4.5 Z"/><rect x="11" y="8" width="1.2" height="1.2"/>
<path d="M21 3 L25 6 L21 9 M23 6 L27 6" stroke="#aaa" stroke-width="1" fill="none"/>
<path d="M37 9 L51 9 Q53 9 52 7 Q51 5 49 6 Q48 2 44 3 Q41 3 41 6 Q38 5 38 7 Z"/>
<rect x="80" y="2" width="8" height="7" fill="none" stroke="#bdbdbd" stroke-width="0.9"/><rect x="82" y="4" width="4" height="3"/><rect x="89" y="8" width="1" height="1"/>
<rect x="97" y="2" width="8" height="8" fill="none" stroke="#bdbdbd" stroke-width="0.9"/><rect x="99" y="4" width="4" height="1"/><rect x="99" y="6" width="4" height="1"/>
<path d="M114 3 L117 3 L118 4 L123 4 L123 9 L114 9 Z"/>
<rect x="131" y="2" width="8" height="7" fill="none" stroke="#bdbdbd" stroke-width="0.9"/><path d="M133 5 L137 5 M135 3 L135 7" stroke="#bdbdbd" stroke-width="1"/>
<path d="M149 3 L157 3 M151 3 L151 2 L155 2 L155 3 M150 4 L150 10 L156 10 L156 4" stroke="#8a8a8a" stroke-width="1" fill="none"/>
</svg>
<div class="a" style="left:873.5px;top:323px;width:181px;height:1.5px;background:#474747"></div>
<div class="a" style="left:878.30px;top:230.8px;width:8.3px;height:8.4px;background:#fff"></div><svg class="a" style="left:878.30px;top:230.8px" width="9" height="9" viewBox="0 0 9 9"><path d="M8.3 0 L0 8.4" stroke="#e3141b" stroke-width="1.1"/></svg><div class="a" style="left:887.57px;top:230.8px;width:8.3px;height:8.4px;background:#e8e8e8"></div><svg class="a" style="left:887.57px;top:230.8px" width="9" height="9" viewBox="0 0 9 9"><path d="M4.15 0 L4.15 8.4 M0 4.2 L8.3 4.2" stroke="#777" stroke-width="1"/><rect x="1" y="1" width="2.3" height="2.3" fill="#999"/><rect x="5" y="5" width="2.3" height="2.3" fill="#999"/></svg><div class="a" style="left:896.84px;top:230.8px;width:8.3px;height:8.4px;background:#ffffff"></div><div class="a" style="left:906.11px;top:230.8px;width:8.3px;height:8.4px;background:#000000"></div><div class="a" style="left:915.38px;top:230.8px;width:8.3px;height:8.4px;background:#e3000f"></div><div class="a" style="left:924.65px;top:230.8px;width:8.3px;height:8.4px;background:#ffea00"></div><div class="a" style="left:933.92px;top:230.8px;width:8.3px;height:8.4px;background:#009641"></div><div class="a" style="left:943.19px;top:230.8px;width:8.3px;height:8.4px;background:#009fe3"></div><div class="a" style="left:952.46px;top:230.8px;width:8.3px;height:8.4px;background:#312783"></div><div class="a" style="left:961.73px;top:230.8px;width:8.3px;height:8.4px;background:#e5007d"></div><div class="a" style="left:971.00px;top:230.8px;width:8.3px;height:8.4px;background:#cc1517"></div><div class="a" style="left:980.27px;top:230.8px;width:8.3px;height:8.4px;background:#e53329"></div><div class="a" style="left:989.54px;top:230.8px;width:8.3px;height:8.4px;background:#e84e1b"></div><div class="a" style="left:998.81px;top:230.8px;width:8.3px;height:8.4px;background:#f29100"></div><div class="a" style="left:1008.08px;top:230.8px;width:8.3px;height:8.4px;background:#f9b232"></div><div class="a" style="left:1017.35px;top:230.8px;width:8.3px;height:8.4px;background:#ffec00"></div><div class="a" style="left:1026.62px;top:230.8px;width:8.3px;height:8.4px;background:#dedc00"></div><div class="a" style="left:878.30px;top:240.1px;width:8.3px;height:8.4px;background:#94c11e"></div><div class="a" style="left:887.57px;top:240.1px;width:8.3px;height:8.4px;background:#3aa935"></div><div class="a" style="left:896.84px;top:240.1px;width:8.3px;height:8.4px;background:#009641"></div><div class="a" style="left:906.11px;top:240.1px;width:8.3px;height:8.4px;background:#006633"></div><div class="a" style="left:915.38px;top:240.1px;width:8.3px;height:8.4px;background:#2fac66"></div><div class="a" style="left:924.65px;top:240.1px;width:8.3px;height:8.4px;background:#00a09a"></div><div class="a" style="left:933.92px;top:240.1px;width:8.3px;height:8.4px;background:#35a8e0"></div><div class="a" style="left:943.19px;top:240.1px;width:8.3px;height:8.4px;background:#1d70b7"></div><div class="a" style="left:952.46px;top:240.1px;width:8.3px;height:8.4px;background:#2c2e82"></div><div class="a" style="left:961.73px;top:240.1px;width:8.3px;height:8.4px;background:#29235c"></div><div class="a" style="left:971.00px;top:240.1px;width:8.3px;height:8.4px;background:#652382"></div><div class="a" style="left:980.27px;top:240.1px;width:8.3px;height:8.4px;background:#941a80"></div><div class="a" style="left:989.54px;top:240.1px;width:8.3px;height:8.4px;background:#a2195b"></div><div class="a" style="left:998.81px;top:240.1px;width:8.3px;height:8.4px;background:#d60b51"></div><div class="a" style="left:1008.08px;top:240.1px;width:8.3px;height:8.4px;background:#e5007d"></div><div class="a" style="left:1017.35px;top:240.1px;width:8.3px;height:8.4px;background:#cdb39a"></div><div class="a" style="left:1026.62px;top:240.1px;width:8.3px;height:8.4px;background:#b09a85"></div><div class="a" style="left:878.30px;top:249.4px;width:8.3px;height:8.4px;background:#7a6550"></div><div class="a" style="left:887.57px;top:249.4px;width:8.3px;height:8.4px;background:#6a5242"></div><div class="a" style="left:896.84px;top:249.4px;width:8.3px;height:8.4px;background:#c79e6c"></div><div class="a" style="left:906.11px;top:249.4px;width:8.3px;height:8.4px;background:#b48650"></div><div class="a" style="left:915.38px;top:249.4px;width:8.3px;height:8.4px;background:#9e6a3a"></div><div class="a" style="left:924.65px;top:249.4px;width:8.3px;height:8.4px;background:#8f5a2c"></div><div class="a" style="left:933.92px;top:249.4px;width:8.3px;height:8.4px;background:#7b4219"></div><div class="a" style="left:943.19px;top:249.4px;width:8.3px;height:8.4px;background:#5c3418"></div><div class="a" style="left:952.46px;top:249.4px;width:8.3px;height:8.4px;background:linear-gradient(90deg,#fff,#666)"></div><div class="a" style="left:961.73px;top:249.4px;width:8.3px;height:8.4px;background:linear-gradient(90deg,#ffdd00,#e8501a)"></div><div class="a" style="left:971.00px;top:249.4px;width:8.3px;height:8.4px;background:linear-gradient(90deg,#1a6bc4,#fff)"></div><div class="a" style="left:980.27px;top:249.4px;width:8.3px;height:8.4px;background:#111"></div><div class="a" style="left:981.77px;top:250.9px;width:5.3px;height:5.3px;border-radius:50%;background:#ddd"></div><div class="a" style="left:989.54px;top:249.4px;width:8.3px;height:8.4px;background:#8cc63f"></div><div class="a" style="left:991.54px;top:251.4px;width:4.3px;height:4.3px;background:#e6f0c0;transform:rotate(45deg)"></div><div class="a" style="left:998.81px;top:249.4px;width:8.3px;height:8.4px;background:#b08a66;background-image:radial-gradient(circle at 30% 40%,#e0c0a0 1px,transparent 2px),radial-gradient(circle at 70% 70%,#7a5a40 1px,transparent 2px)"></div><div class="a" style="left:1008.08px;top:249.4px;width:8.3px;height:8.4px;background:#2a3a50"></div><div class="a" style="left:1009.08px;top:250.4px;width:6.3px;height:6.3px;background:#0a9be3;border-radius:0 0 3px 3px"></div><svg class="a" style="left:1012.88px;top:254.3px" width="4" height="4" viewBox="0 0 4 4"><path d="M3.5 0 L3.5 3.5 L0 3.5 Z" fill="#e8e8e8"/></svg><svg class="a" style="left:878.30px;top:261px" width="9" height="8" viewBox="0 0 9 8"><path d="M0.5 1 L3.5 1 L4.5 2 L8.5 2 L8.5 7 L0.5 7 Z" fill="#bdbdbd"/><rect x="0.5" y="3" width="8" height="0.8" fill="#777"/></svg><div class="a" style="left:887.57px;top:260px;width:8.3px;height:8.4px;background:#000000"></div><div class="a" style="left:896.84px;top:260px;width:8.3px;height:8.4px;background:#3c3c3b"></div><div class="a" style="left:906.11px;top:260px;width:8.3px;height:8.4px;background:#575756"></div><div class="a" style="left:915.38px;top:260px;width:8.3px;height:8.4px;background:#706f6f"></div><div class="a" style="left:924.65px;top:260px;width:8.3px;height:8.4px;background:#878787"></div><div class="a" style="left:933.92px;top:260px;width:8.3px;height:8.4px;background:#9d9d9c"></div><div class="a" style="left:943.19px;top:260px;width:8.3px;height:8.4px;background:#b1b1b1"></div><div class="a" style="left:952.46px;top:260px;width:8.3px;height:8.4px;background:#c6c6c5"></div><div class="a" style="left:961.73px;top:260px;width:8.3px;height:8.4px;background:#dadada"></div><div class="a" style="left:971.00px;top:260px;width:8.3px;height:8.4px;background:#ededed"></div><div class="a" style="left:980.27px;top:260px;width:8.3px;height:8.4px;background:#f6f6f6"></div><svg class="a" style="left:878.30px;top:271.3px" width="9" height="8" viewBox="0 0 9 8"><path d="M0.5 1 L3.5 1 L4.5 2 L8.5 2 L8.5 7 L0.5 7 Z" fill="#bdbdbd"/><rect x="0.5" y="3" width="8" height="0.8" fill="#777"/></svg><div class="a" style="left:887.57px;top:270.3px;width:8.3px;height:8.4px;background:#e3000f"></div><div class="a" style="left:896.84px;top:270.3px;width:8.3px;height:8.4px;background:#ed6c0e"></div><div class="a" style="left:906.11px;top:270.3px;width:8.3px;height:8.4px;background:#ffdd00"></div><div class="a" style="left:915.38px;top:270.3px;width:8.3px;height:8.4px;background:#009640"></div><div class="a" style="left:924.65px;top:270.3px;width:8.3px;height:8.4px;background:#2a3590"></div><div class="a" style="left:933.92px;top:270.3px;width:8.3px;height:8.4px;background:#7b2e8e"></div>
<!-- Contour panel -->
<div class="a" style="left:873.5px;top:325px;width:181px;height:17.5px;background:#424242"></div>
<div class="a" style="left:873.5px;top:325px;width:43.5px;height:17.5px;background:#535353"></div>
<div class="a" style="left:917px;top:325px;width:98px;height:17.5px;background:#474747"></div>
<div class="a" style="left:958px;top:325px;width:0.8px;height:17.5px;background:#414141"></div>
<div class="a" style="left:877px;top:331.5px;width:0.8px;height:4px;background:#777"></div>
<div class="t" style="left:884px;top:329px;font-size:7.1px;font-weight:700;color:#ececec">Contour</div>
<div class="t" style="left:923.5px;top:329px;font-size:7.5px;color:#b4b4b4">Dégradé</div>
<div class="t" style="left:964.5px;top:329px;font-size:7.55px;color:#b4b4b4">Transparence</div>
<div class="a" style="left:1043px;top:331px;width:7px;height:1px;background:#888"></div><div class="a" style="left:1043px;top:333.5px;width:7px;height:1px;background:#888"></div><div class="a" style="left:1043px;top:336px;width:7px;height:1px;background:#888"></div>
<div class="t" style="left:888.4px;top:349.5px;font-size:7.2px;color:#c8c8c8">Graisse<span style="color:#888"> :</span></div>
<svg class="a" style="left:923px;top:348px" width="8" height="12" viewBox="0 0 8 12"><path d="M1.5 4 L4 1.5 L6.5 4 M1.5 8 L4 10.5 L6.5 8" stroke="#c9c9c9" stroke-width="1" fill="none"/></svg>
<div class="a" style="left:934.4px;top:348px;width:36.6px;height:12px;background:#474747"></div>
<div class="a" style="left:971px;top:348px;width:13px;height:12px;background:#4a4a4a"></div>
<svg class="a" style="left:974.5px;top:352px" width="7" height="5" viewBox="0 0 7 5"><path d="M0.7 0.7 L3.5 3.5 L6.3 0.7" stroke="#d8d8d8" stroke-width="1.2" fill="none"/></svg>
<div class="t" style="left:892.3px;top:367px;font-size:7.2px;color:#7a7a7a">Aspect :</div>
<div class="t" style="left:896px;top:384.5px;font-size:7.2px;color:#7a7a7a">Angle :</div>
<div class="t" style="left:883.7px;top:402.5px;font-size:7.2px;color:#7a7a7a">Alig. cont. :</div>
<svg class="a" style="left:921px;top:364px" width="46" height="50" viewBox="0 0 46 50" fill="none" stroke="#7a7a7a" stroke-width="0.9">
<rect x="0.5" y="0.5" width="14" height="14" stroke="#4c4c4c"/><rect x="15.5" y="0.5" width="14" height="14" stroke="#4c4c4c"/><rect x="30.5" y="0.5" width="14" height="14" stroke="#4c4c4c"/>
<rect x="3" y="5" width="8" height="5" fill="#7a7a7a"/><rect x="18" y="5" width="9" height="5" fill="#7a7a7a" rx="2"/><rect x="33" y="5" width="9" height="5" fill="#7a7a7a"/>
<rect x="0.5" y="18.5" width="14" height="14" stroke="#4c4c4c"/><rect x="15.5" y="18.5" width="14" height="14" stroke="#4c4c4c"/><rect x="30.5" y="18.5" width="14" height="14" stroke="#4c4c4c"/>
<path d="M3 29 L3 22 L11 22 L11 25 L6 25 L6 29 Z"/><path d="M18 29 L18 25 Q18 22 21 22 L26 22 L26 25 L21 25 L21 29 Z"/><path d="M33 29 L33 24 L35 22 L41 22 L41 25 L36 25 L36 29 Z"/>
<rect x="0.5" y="36.5" width="14" height="13" stroke="#4c4c4c"/><rect x="15.5" y="36.5" width="14" height="13" stroke="#4c4c4c"/><rect x="30.5" y="36.5" width="14" height="13" stroke="#4c4c4c"/>
<path d="M4 39 L4 47 L11 47 M6 42 L9 42 L9 45" /><path d="M19 39 L19 47 L26 47"/><path d="M34 39 L34 47 L41 47"/>
</svg>
<div class="t" style="left:970px;top:384.5px;font-size:7.2px;color:#7a7a7a">Limite :</div>
<div class="a" style="left:995.8px;top:383.6px;width:29px;height:11.8px;background:#575757"></div>
<div class="t" style="left:1027.5px;top:384.5px;font-size:7px;color:#7a7a7a">x</div>
<div class="a" style="left:878.3px;top:426.7px;width:7.6px;height:7.5px;background:#e0e0e0;border-radius:1px"></div>
<div class="a" style="left:879.8px;top:429.9px;width:4.6px;height:1.2px;background:#444"></div>
<div class="t" style="left:889.7px;top:425.5px;font-size:7.3px;color:#e0e0e0">Pointillé</div>
<div class="a" style="left:981.8px;top:424.5px;width:22.6px;height:10.8px;border:1px solid #4c4c4c"></div>
<div class="a" style="left:1007.6px;top:424.5px;width:22.7px;height:10.8px;border:1px solid #4c4c4c"></div>
<svg class="a" style="left:982px;top:425px" width="48" height="10" viewBox="0 0 48 10" stroke="#777" stroke-width="0.8" fill="none"><path d="M4 3 L8 3 M10 3 L14 3 M16 3 L19 3 M4 7 L7 7 M10 7 L14 7 M16 7 L19 7 M19 3 L19 7"/><path d="M30 3 L34 3 M36 3 L40 3 M30 7 L34 7 M36 7 L40 7 M27 3 L27 7 M43 3 L43 7"/></svg>
<div id="dashes"></div>
<div class="t" style="left:890.2px;top:476px;font-size:7.2px;color:#7a7a7a">Flèches :</div>
<div class="a" style="left:920.8px;top:472.9px;width:28.6px;height:14px;background:#7c7c7c"></div>
<div class="a" style="left:949.4px;top:472.9px;width:11.6px;height:14px;background:#575757"></div>
<div class="a" style="left:968.4px;top:472.9px;width:28.9px;height:14px;background:#7c7c7c"></div>
<div class="a" style="left:997.3px;top:472.9px;width:11.7px;height:14px;background:#575757"></div>
<svg class="a" style="left:952px;top:478px" width="60" height="5" viewBox="0 0 60 5"><path d="M0.7 0.7 L3.5 3.5 L6.3 0.7 M48.7 0.7 L51.5 3.5 L54.3 0.7" stroke="#777" stroke-width="1" fill="none"/></svg>
<svg class="a" style="left:1019px;top:474px" width="13" height="12" viewBox="0 0 13 12" stroke="#7a7a7a" stroke-width="1" fill="none"><path d="M1 4 L11 4 M9 2 L11 4 L9 6 M12 8 L2 8 M4 6 L2 8 L4 10"/></svg>
<div class="t" style="left:890px;top:495.5px;font-size:7.2px;color:#7a7a7a">Echelle :</div>
<div class="a" style="left:920.8px;top:493.4px;width:40.5px;height:12.9px;background:#575757"></div>
<div class="a" style="left:968.4px;top:493.4px;width:40.6px;height:12.9px;background:#575757"></div>
<svg class="a" style="left:922px;top:494px" width="60" height="12" viewBox="0 0 60 12" stroke="#6e6e6e" stroke-width="0.9" fill="none"><path d="M2 4 L4.5 1.5 L7 4 M2 8 L4.5 10.5 L7 8 M49 4 L51.5 1.5 L54 4 M49 8 L51.5 10.5 L54 8"/></svg>
<svg class="a" style="left:1019px;top:493px" width="12" height="13" viewBox="0 0 12 13" stroke="#7a7a7a" stroke-width="1" fill="none"><circle cx="5" cy="4" r="2.5"/><circle cx="7" cy="9" r="2.5"/><path d="M2 1 L10 12"/></svg>
<div class="t" style="left:878.3px;top:515px;font-size:7.2px;color:#7a7a7a">Alignement :</div>
<div class="a" style="left:920.8px;top:513px;width:13.7px;height:14px;border:1px solid #4c4c4c"></div>
<div class="a" style="left:935px;top:513px;width:14px;height:14px;border:1px solid #4c4c4c"></div>
<svg class="a" style="left:921px;top:513px" width="28" height="14" viewBox="0 0 28 14" stroke="#7a7a7a" stroke-width="0.9" fill="none"><path d="M3 7 L11 7 M8 5 L11 7 L8 9 M3 4 L3 10"/><path d="M17 5 L25 5 M17 9 L25 9 M22 3 L25 5 L22 7"/></svg>
<div class="t" style="left:897.7px;top:537.5px;font-size:7.2px;color:#7a7a7a">Profil :</div>
<div class="a" style="left:920.8px;top:535.4px;width:63.1px;height:14px;background:#7c7c7c"></div>
<div class="a" style="left:984.5px;top:535.4px;width:13px;height:14px;background:#575757"></div>
<svg class="a" style="left:988px;top:540.5px" width="7" height="5" viewBox="0 0 7 5"><path d="M0.7 0.7 L3.5 3.5 L6.3 0.7" stroke="#777" stroke-width="1" fill="none"/></svg>
<div class="t" style="left:1001px;top:537.5px;font-size:7.2px;color:#6a6a6a">▷◁</div>
<svg class="a" style="left:1018px;top:536px" width="10" height="12" viewBox="0 0 10 12" stroke="#7a7a7a" stroke-width="0.9" fill="none"><path d="M1 1 L9 1 M1 11 L9 11 M5 3 L2 6 L8 6 Z M5 9 L2 6"/></svg>
<div class="a" style="left:873.5px;top:554.5px;width:181px;height:2px;background:#474747"></div>

<!-- Aspect tabs -->
<div class="a" style="left:873.5px;top:556.5px;width:181px;height:17.7px;background:#424242"></div>
<div class="a" style="left:873.5px;top:556.5px;width:35.5px;height:17.7px;background:#535353"></div>
<div class="a" style="left:909px;top:556.5px;width:72.8px;height:17.7px;background:#474747"></div>
<div class="t" style="left:880.5px;top:560.5px;font-size:6.9px;font-weight:700;color:#ececec">Aspect</div>
<div class="t" style="left:915px;top:560.5px;font-size:7.5px;color:#b4b4b4">Styles graphiques</div>
<div class="a" style="left:1043px;top:562px;width:7px;height:1px;background:#888"></div><div class="a" style="left:1043px;top:564.5px;width:7px;height:1px;background:#888"></div><div class="a" style="left:1043px;top:567px;width:7px;height:1px;background:#888"></div>
<div class="a" style="left:873.5px;top:574.2px;width:181px;height:3.3px;background:#3e3e3e"></div>

<!-- Calques -->
<div class="a" style="left:873.5px;top:577.5px;width:181px;height:17.2px;background:#424242"></div>
<div class="a" style="left:873.5px;top:577.5px;width:39.3px;height:17.2px;background:#535353"></div>
<div class="a" style="left:912.8px;top:577.5px;width:115px;height:17.2px;background:#474747"></div>
<div class="a" style="left:972px;top:577.5px;width:0.8px;height:17.2px;background:#414141"></div>
<div class="t" style="left:880.4px;top:582px;font-size:6.95px;font-weight:700;color:#ececec">Calques</div>
<div class="t" style="left:919px;top:582px;font-size:7.7px;color:#b4b4b4">Exportation de</div>
<div class="t" style="left:976px;top:582px;font-size:7.6px;color:#b4b4b4">Plans de travai</div>
<div class="a" style="left:1043px;top:583px;width:7px;height:1px;background:#888"></div><div class="a" style="left:1043px;top:585.5px;width:7px;height:1px;background:#888"></div><div class="a" style="left:1043px;top:588px;width:7px;height:1px;background:#888"></div>
<div class="a" style="left:877.5px;top:598px;width:174px;height:84px;border:1px solid #4e4e4e"></div>
<!-- rows -->
<div class="a" style="left:878.3px;top:599.4px;width:172.2px;height:13.6px;background:#4d6382"></div>
<div class="a" style="left:878.3px;top:613px;width:172.2px;height:0.8px;background:#484848"></div>
<div class="a" style="left:878.3px;top:626.8px;width:172.2px;height:0.8px;background:#484848"></div>
<div class="a" style="left:878.3px;top:640.7px;width:172.2px;height:0.8px;background:#484848"></div>
<div class="a" style="left:892px;top:613px;width:0.8px;height:27.7px;background:#4a4a4a"></div>
<div class="a" style="left:904.5px;top:613px;width:0.8px;height:27.7px;background:#4a4a4a"></div>
<svg class="a" style="left:880px;top:603px" width="10" height="35" viewBox="0 0 10 35"><g fill="none" stroke="#d0d0d0" stroke-width="0.9"><path d="M1 3 Q5 -1 9 3 Q5 7 1 3 Z"/><path d="M1 17 Q5 13 9 17 Q5 21 1 17 Z"/><path d="M1 31 Q5 27 9 31 Q5 35 1 31 Z"/></g><circle cx="5" cy="3" r="1.3" fill="#d0d0d0"/><circle cx="5" cy="17" r="1.3" fill="#d0d0d0"/><circle cx="5" cy="31" r="1.3" fill="#d0d0d0"/></svg>
<svg class="a" style="left:896px;top:630px" width="7" height="8" viewBox="0 0 7 8"><path d="M1.5 3.5 L1.5 2.2 Q1.5 0.5 3.5 0.5 Q5.5 0.5 5.5 2.2 L5.5 3.5" stroke="#ccc" stroke-width="0.9" fill="none"/><rect x="0.5" y="3.5" width="6" height="4.5" fill="#ccc"/></svg>
<div class="a" style="left:906.9px;top:600.5px;width:1.6px;height:12px;background:#4bdc3e"></div>
<div class="a" style="left:906.9px;top:614.2px;width:1.6px;height:12px;background:#e0393e"></div>
<div class="a" style="left:906.9px;top:628px;width:1.6px;height:12px;background:#4a6ee0"></div>
<svg class="a" style="left:913.5px;top:603px" width="5" height="35" viewBox="0 0 5 35" stroke="#d0d0d0" stroke-width="1" fill="none"><path d="M1 0.5 L3.5 3 L1 5.5 M1 14.5 L3.5 17 L1 19.5 M1 28.5 L3.5 31 L1 33.5"/></svg>
<div class="a" style="left:926.2px;top:600.5px;width:11.6px;height:11.5px;background:#eee;border:0.7px solid #222"></div>
<svg class="a" style="left:927px;top:601.3px" width="10" height="10" viewBox="0 0 10 10"><path d="M1 2 L3 1 L4 3 L6 3 L7 1 L9 2 L9 6 Q8 9 5 9 Q2 9 1 6 Z" fill="#0a9be3"/></svg>
<div class="a" style="left:926.2px;top:614.2px;width:11.6px;height:11.5px;background:#eee;border:0.7px solid #222"></div>
<div class="a" style="left:928.5px;top:616.5px;width:7px;height:7px;background:#b59a72;border-radius:2px"></div>
<div class="a" style="left:930px;top:618px;width:4px;height:3px;background:#3a4a5a"></div>
<div class="a" style="left:926.2px;top:628px;width:11.6px;height:11.5px;background:#eee;border:0.7px solid #222"></div>
<div class="a" style="left:927.2px;top:629.5px;width:9.6px;height:8.5px;background:#c49a62"></div>
<div class="t" style="left:941.5px;top:601.5px;font-size:7.4px;color:#e8e8e8">Blanc</div>
<div class="t" style="left:941.5px;top:615.3px;font-size:7.4px;color:#d8d8d8">Image Quadri</div>
<div class="t" style="left:941.5px;top:629.2px;font-size:7.4px;color:#d8d8d8">Fond</div>
<svg class="a" style="left:1030px;top:602px" width="20" height="36" viewBox="0 0 20 36" fill="none" stroke="#c8c8c8" stroke-width="0.9"><circle cx="3.5" cy="4.2" r="2.4"/><circle cx="3.5" cy="18" r="2.4"/><circle cx="3.5" cy="31.8" r="2.4"/></svg>
<div class="a" style="left:1039.8px;top:603px;width:6px;height:6px;background:#222"></div>
<div class="a" style="left:1040.8px;top:604px;width:4px;height:4px;background:#3ee03a"></div>
<svg class="a" style="left:1045.5px;top:599.4px" width="5" height="5" viewBox="0 0 5 5"><path d="M0 0 L5 0 L5 5 Z" fill="#e8e8e8"/></svg>
<!-- footer -->
<div class="t" style="left:877.3px;top:685.5px;font-size:7.5px;color:#b8b8b8">3 Cal...</div>
<svg class="a" style="left:940px;top:684px" width="100" height="12" viewBox="0 0 100 12" fill="none" stroke="#c0c0c0" stroke-width="0.9">
<path d="M1 3 L1 10 L8 10 L8 7 M4 2 L9 2 L9 6 M9 2 L4 7"/>
<circle cx="24" cy="5" r="3"/><path d="M22 7.5 L19.5 10.5" stroke-width="1.3"/>
<rect x="36" y="2" width="7" height="8"/><path d="M37 9 L42 3" />
<path d="M52 4 L56 4 M52 4 L54 2 M52 4 L54 6" /><rect x="57" y="3" width="7" height="7" fill="#c0c0c0"/>
<rect x="71" y="2" width="8" height="8" fill="#c0c0c0"/><path d="M73 6 L77 6 M75 4 L75 8" stroke="#535353"/>
<path d="M87 3 L95 3 M89 3 L89 2 L93 2 L93 3 M88 4 L88 10.5 L94 10.5 L94 4" stroke="#9a9a9a"/>
</svg>
<div class="a" style="left:878.3px;top:440.7px;width:24.4px;height:14px;background:#575757"></div><div class="t" style="left:878.3px;top:455.3px;width:24.4px;text-align:center;font-size:7.2px;color:#7a7a7a">Tiret</div><div class="a" style="left:904.2px;top:440.7px;width:24.4px;height:14px;background:#575757"></div><div class="t" style="left:904.2px;top:455.3px;width:24.4px;text-align:center;font-size:7.2px;color:#7a7a7a">Espace</div><div class="a" style="left:930.1px;top:440.7px;width:24.4px;height:14px;background:#575757"></div><div class="t" style="left:930.1px;top:455.3px;width:24.4px;text-align:center;font-size:7.2px;color:#7a7a7a">Tiret</div><div class="a" style="left:956.0px;top:440.7px;width:24.4px;height:14px;background:#575757"></div><div class="t" style="left:956.0px;top:455.3px;width:24.4px;text-align:center;font-size:7.2px;color:#7a7a7a">Espace</div><div class="a" style="left:981.9px;top:440.7px;width:24.4px;height:14px;background:#575757"></div><div class="t" style="left:981.9px;top:455.3px;width:24.4px;text-align:center;font-size:7.2px;color:#7a7a7a">Tiret</div><div class="a" style="left:1007.8px;top:440.7px;width:24.4px;height:14px;background:#575757"></div><div class="t" style="left:1007.8px;top:455.3px;width:24.4px;text-align:center;font-size:7.2px;color:#7a7a7a">Espace</div>
<!-- ===== STATUS BAR ===== -->
<div class="a" style="left:49px;top:686px;width:813px;height:10px;background:#4b4b4b"></div>
<div class="a" style="left:49px;top:686px;width:813px;height:1px;background:#444"></div>
<div class="a" style="left:50px;top:687px;width:32px;height:9px;background:#454545"></div><div class="a" style="left:83px;top:687px;width:13px;height:9px;background:#474747"></div>
<div class="t" style="left:53px;top:688px;font-size:7px;line-height:10px;color:#c8c8c8">66,67%</div>
<svg class="a" style="left:88px;top:690px" width="6" height="4" viewBox="0 0 6 4"><path d="M0.6 0.6 L3 3 L5.4 0.6" stroke="#c8c8c8" stroke-width="1" fill="none"/></svg>
<svg class="a" style="left:102px;top:689.5px" width="18" height="6" viewBox="0 0 18 6" fill="#6e6e6e"><rect x="0" y="0.5" width="1" height="5"/><path d="M6 0.5 L2 3 L6 5.5 Z"/><path d="M16 0.5 L12 3 L16 5.5 Z"/></svg>
<div class="a" style="left:123px;top:686px;width:28px;height:10px;background:#444"></div>
<div class="t" style="left:126px;top:688.5px;font-size:7px;line-height:10px;color:#d0d0d0">1</div>
<svg class="a" style="left:154px;top:690px" width="6" height="4" viewBox="0 0 6 4"><path d="M0.6 0.6 L3 3 L5.4 0.6" stroke="#c8c8c8" stroke-width="1" fill="none"/></svg>
<svg class="a" style="left:167px;top:689.5px" width="18" height="6" viewBox="0 0 18 6" fill="#6e6e6e"><path d="M2 0.5 L6 3 L2 5.5 Z"/><path d="M11 0.5 L15 3 L11 5.5 Z"/><rect x="16" y="0.5" width="1" height="5"/></svg>
<div class="t" style="left:200.6px;top:688px;font-size:7.2px;line-height:10px;color:#c0c0c0">Activer/Désactiver Sélection directe</div>
<svg class="a" style="left:327px;top:689.5px" width="5" height="6" viewBox="0 0 5 6"><path d="M0.5 0.5 L4.5 3 L0.5 5.5 Z" fill="#d0d0d0"/></svg>
<div class="a" style="left:336px;top:686px;width:526px;height:10px;background:#4a4a4a;border-left:1px solid #3e3e3e"></div>
<svg class="a" style="left:341px;top:689.5px" width="4" height="6" viewBox="0 0 4 6"><path d="M3.5 0.5 L0.8 3 L3.5 5.5" stroke="#888" stroke-width="0.9" fill="none"/></svg>
<div class="a" style="left:586px;top:687.5px;width:16.5px;height:8px;background:#6a6a6a;border-radius:4px"></div>
<svg class="a" style="left:855px;top:689.5px" width="4" height="6" viewBox="0 0 4 6"><path d="M0.5 0.5 L3.2 3 L0.5 5.5" stroke="#888" stroke-width="0.9" fill="none"/></svg>
<svg class="a" style="left:0;top:0" width="1080" height="696" viewBox="0 0 1080 696">
<path d="M549.8 370.2 L877.5 100.5" stroke="#e5361f" stroke-width="1.6" stroke-linecap="round"/>
<path d="M881.5 97.5 L872.8 99.6 L878.8 106 Z" fill="#ee2c1c"/>
</svg></body></html>
